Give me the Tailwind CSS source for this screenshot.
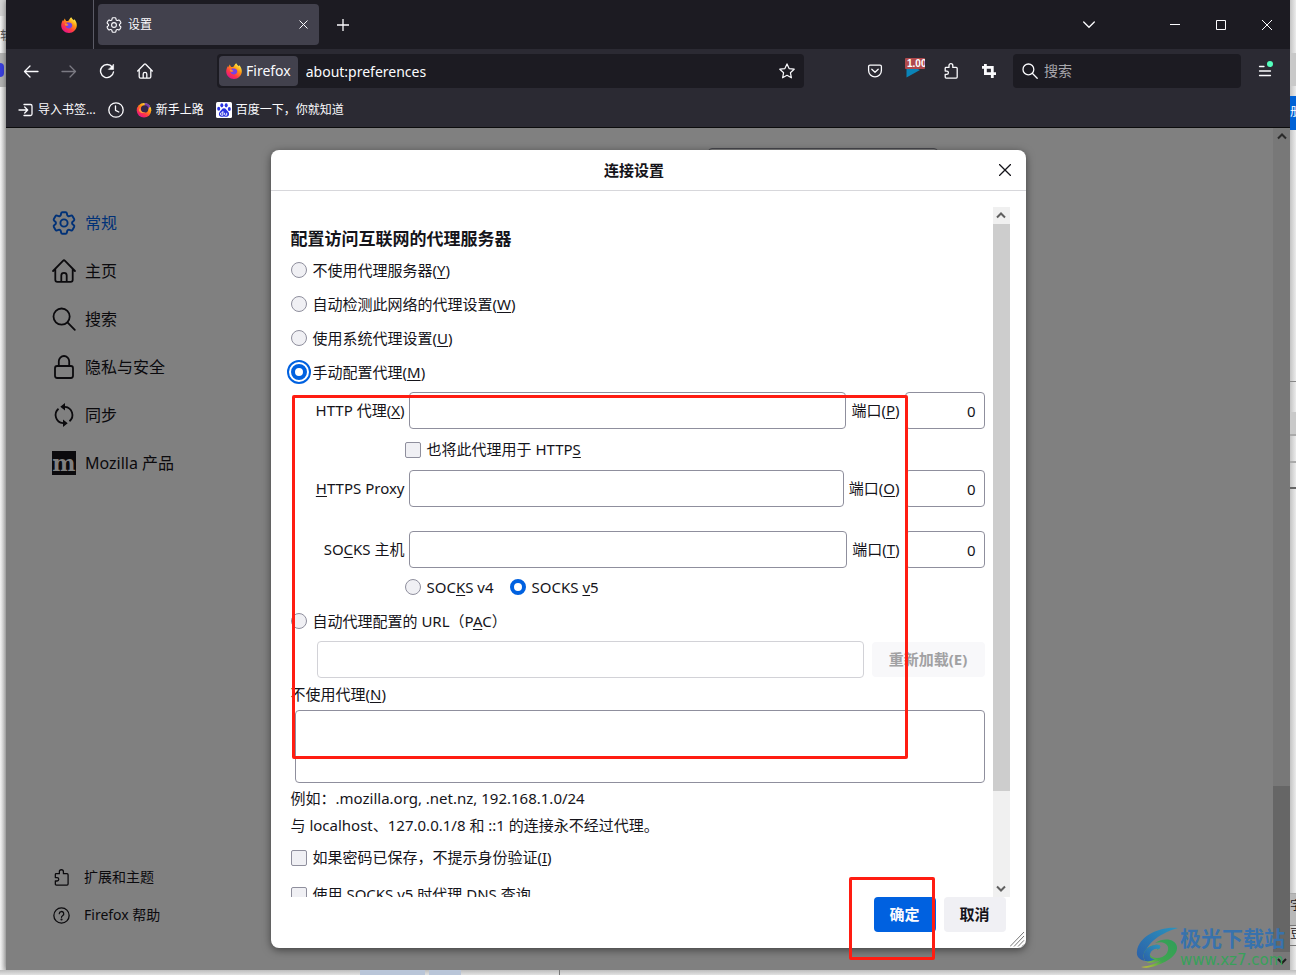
<!DOCTYPE html>
<html lang="zh-CN">
<head>
<meta charset="utf-8">
<meta name="viewport" content="width=device-width, initial-scale=1">
<title>设置</title>
<script src="https://cdn.jsdelivr.net/npm/@tailwindcss/browser@4"></script>
</head>
<body class="font-['Noto_Sans','Noto_Sans_CJK_SC',sans-serif] bg-[#e4e4e4] text-[#15141a]">
<svg class="absolute size-0" aria-hidden="true">
  <defs>
    <linearGradient id="fox" x1="0.85" y1="0.1" x2="0.25" y2="0.95"><stop offset="0" stop-color="#fff44f"/><stop offset=".35" stop-color="#ff980e"/><stop offset=".7" stop-color="#ff3647"/><stop offset="1" stop-color="#e31587"/></linearGradient>
    <linearGradient id="swoop" x1="1" y1="0" x2="0" y2="1"><stop offset="0" stop-color="#2b93bd"/><stop offset="1" stop-color="#2c5fa8"/></linearGradient>
    <linearGradient id="leaf" x1="1" y1="0" x2="0" y2="1"><stop offset="0" stop-color="#2f9e5a"/><stop offset=".6" stop-color="#3fa64f"/><stop offset="1" stop-color="#d3c62f"/></linearGradient>
  </defs>
  <symbol id="i-fox" viewBox="0 0 16 16">
    <path d="M10.3.2c.4 1.300 1.400 1.900 2.400 3 .3.100.3-.9.200-1.200C14.800 3.600 16 6 15.800 8.800 15.500 12.800 12.200 16 8 16 3.700 16 .3 12.700.2 8.500.2 6.300 1 4.300 2.100 3l.3 1.300C3 3.600 3.200 2.300 3.900 1.600c.1 1 .6 1.800 1.300 2.300h2C8 3 8.800 1.200 10.300.2z" fill="url(#fox)"/>
    <path d="M5.300 5.400c1-.4 2 .1 2.700.1 1.200-.2 3.200.7 3.300 2.700.1 1.900-1.500 3.300-3.300 3.300-1.900 0-3.400-1.300-3.400-3.100 1 .8 2.200.5 2.900-.1-.5-.4-1.800-.3-2-1.200-.1-.5.200-1 1.200-1.100z" fill="#7542e5"/>
    <path d="M4.300 6.200c.4.900 1.500 1.400 3.200 1.200-.7 1.100-2 1.400-3.200.9z" fill="#ffb02a"/>
  </symbol>
  <symbol id="i-gear" viewBox="2 2 20 20" fill="none" stroke="currentColor">
    <path d="M9.594 3.940c.09-.542.56-.94 1.110-.94h2.593c.55 0 1.020.398 1.110.94l.213 1.281c.063.374.313.686.645.87.074.04.147.083.22.127.325.196.72.257 1.075.124l1.217-.456a1.125 1.125 0 0 1 1.370.49l1.296 2.247a1.125 1.125 0 0 1-.26 1.431l-1.003.827c-.293.241-.438.613-.43.992a7.723 7.723 0 0 1 0 .255c-.008.378.137.75.43.991l1.004.827c.424.35.534.955.26 1.430l-1.298 2.247a1.125 1.125 0 0 1-1.369.491l-1.217-.456c-.355-.133-.75-.072-1.076.124a6.470 6.470 0 0 1-.22.128c-.331.183-.581.495-.644.869l-.213 1.281c-.09.543-.56.94-1.110.94h-2.594c-.55 0-1.019-.398-1.110-.94l-.213-1.281c-.062-.374-.312-.686-.644-.87a6.520 6.520 0 0 1-.22-.127c-.325-.196-.72-.257-1.076-.124l-1.217.456a1.125 1.125 0 0 1-1.369-.49l-1.297-2.247a1.125 1.125 0 0 1 .26-1.431l1.004-.827c.292-.24.437-.613.43-.991a6.932 6.932 0 0 1 0-.255c.007-.38-.138-.751-.43-.992l-1.004-.827a1.125 1.125 0 0 1-.26-1.430l1.297-2.247a1.125 1.125 0 0 1 1.370-.491l1.216.456c.356.133.751.072 1.076-.124.072-.044.146-.086.22-.128.332-.183.582-.495.644-.869l.214-1.280Z"/>
    <circle cx="12" cy="12" r="3"/>
  </symbol>
  <symbol id="i-home" viewBox="0 0 16 16" fill="none" stroke="currentColor" stroke-linecap="round" stroke-linejoin="round">
    <path d="M.7 8 7.300 1.200a1 1 0 0 1 1.400 0L15.300 8M2.200 6.600v7.200c0 .8.500 1.400 1.400 1.400h8.800c.9 0 1.400-.6 1.400-1.400V6.600M6.200 15v-4c0-1 .7-1.700 1.800-1.700s1.800.7 1.800 1.700v4"/>
  </symbol>
  <symbol id="i-search" viewBox="0 0 16 16" fill="none" stroke="currentColor" stroke-linecap="round">
    <circle cx="6.400" cy="6.400" r="5.400"/><path d="m10.300 10.300 4.900 4.900"/>
  </symbol>
  <symbol id="i-puzzle" viewBox="0 0 16 16" fill="none" stroke="currentColor" stroke-linejoin="round">
    <path d="M2.200 5.200c0-.5.300-.8.800-.8h3V2.600a1.900 1.900 0 0 1 3.800 0v1.800h3.400c.6 0 1 .4 1 1v8.700c0 .6-.4 1-1 1H3.200c-.6 0-1-.4-1-1v-2.800h1.600a1.500 1.500 0 0 0 0-3.200H2.200z"/>
  </symbol>
</svg>

<div class="flex h-screen flex-col overflow-hidden">
  <div class="flex min-h-0 flex-1">
    <!-- sliver of the window behind, left -->
    <div class="flex w-[6px] shrink-0 flex-col overflow-hidden bg-linear-to-r from-[#f6f6f6] to-[#cfcfcf] text-xs" aria-hidden="true">
      <div class="h-4 bg-[#d4d4d4]"></div>
      <div class="h-[37px] pt-3 text-[#555] whitespace-nowrap">软</div>
      <div class="h-[34px] bg-[#b4b4b4] pt-[10px]"><div class="h-[14px] w-1 rounded-r-full bg-[#3a3fe0]"></div></div>
    </div>

    <div class="flex min-w-0 flex-1 flex-col shadow-[0_0_6px_rgba(0,0,0,0.5)]">
      <!-- tab strip -->
      <div class="flex h-[49px] shrink-0 items-center bg-[#1c1b22] text-[#fbfbfe]">
        <div class="flex h-full w-[88px] shrink-0 items-center justify-end border-r border-[#5b5b66] pr-4">
          <svg class="size-4" role="img" aria-label="Firefox"><use href="#i-fox"/></svg>
        </div>
        <div class="ml-1 flex h-[41px] w-[221px] items-center rounded bg-[#42414d] px-2">
          <svg class="size-4 stroke-[1.4]" aria-hidden="true"><use href="#i-gear"/></svg>
          <span class="ml-[6px] flex-1 text-xs">设置</span>
          <button class="grid size-4 place-items-center" aria-label="关闭标签页"><svg class="size-[9px]" viewBox="0 0 9 9" fill="none" stroke="currentColor"><path d="m.5.5 8 8m0-8-8 8"/></svg></button>
        </div>
        <button class="ml-4 grid size-4 place-items-center" aria-label="新建标签页"><svg class="size-3" viewBox="0 0 12 12" fill="none" stroke="currentColor" stroke-width="1.300"><path d="M6 0v12M0 6h12"/></svg></button>
        <div class="flex-1"></div>
        <button class="mr-10 grid h-8 w-[46px] place-items-center" aria-label="列出标签页"><svg class="size-3" viewBox="0 0 12 12" fill="none" stroke="currentColor" stroke-width="1.300" stroke-linecap="round"><path d="m.7 3 5.300 5.300L11.300 3"/></svg></button>
        <button class="grid h-8 w-[46px] place-items-center" aria-label="最小化"><svg class="size-[10px]" viewBox="0 0 10 10" stroke="currentColor"><path d="M0 4.500h10"/></svg></button>
        <button class="grid h-8 w-[46px] place-items-center" aria-label="最大化"><svg class="size-[10px]" viewBox="0 0 10 10" fill="none" stroke="currentColor"><path d="M.5.5h9v9h-9z"/></svg></button>
        <button class="grid h-8 w-[46px] place-items-center" aria-label="关闭"><svg class="size-[10px]" viewBox="0 0 10 10" fill="none" stroke="currentColor"><path d="m0 0 10 10M10 0 0 10"/></svg></button>
      </div>

      <!-- navigation bar -->
      <div class="flex h-[44px] shrink-0 items-center bg-[#2b2a33] text-[#fbfbfe]">
        <div class="ml-[17px] flex items-center gap-[22px]">
          <button aria-label="后退"><svg class="block size-4" viewBox="0 0 16 16" fill="none" stroke="currentColor" stroke-width="1.300" stroke-linecap="round" stroke-linejoin="round"><path d="M15 8.500H1.500M7 3 1.500 8.500 7 14"/></svg></button>
          <button aria-label="前进" class="text-[#7b7a83]" disabled><svg class="block size-4" viewBox="0 0 16 16" fill="none" stroke="currentColor" stroke-width="1.300" stroke-linecap="round" stroke-linejoin="round"><path d="M1 8.500h13.500M9 3l5.500 5.500L9 14"/></svg></button>
          <button aria-label="刷新"><svg class="block size-4" viewBox="0 0 16 16" fill="none" stroke="currentColor" stroke-width="1.400" stroke-linecap="round"><path d="M13.300 4.200A6.500 6.500 0 1 0 14.500 9"/><path d="M14.600 1.500v4.900H9.700z" fill="currentColor" stroke-width=".6" stroke-linejoin="round"/></svg></button>
          <button aria-label="主页"><svg class="block size-4 stroke-[1.3]"><use href="#i-home"/></svg></button>
        </div>
        <div class="ml-[64px] flex h-[34px] flex-1 items-center rounded bg-[#1c1b22] p-[2px]">
          <button class="flex h-[30px] items-center rounded bg-[#42414d] px-[7px] text-sm"><svg class="mr-1 size-4" aria-hidden="true"><use href="#i-fox"/></svg>Firefox</button>
          <input class="ml-2 h-full min-w-0 flex-1 bg-transparent text-sm outline-none" aria-label="地址栏" value="about:preferences">
          <button class="mr-[7px]" aria-label="为此页添加书签"><svg class="block size-4" viewBox="0 0 16 16" fill="none" stroke="currentColor" stroke-width="1.200" stroke-linejoin="round"><path d="m8 .9 2.100 4.700 5.100.6-3.800 3.500 1 5.100L8 12.300l-4.400 2.500 1-5.100L.8 6.200l5.100-.6z"/></svg></button>
        </div>
        <div class="ml-[63px] flex items-center gap-[22px]">
          <button aria-label="Pocket"><svg class="block size-4" viewBox="0 0 16 16" fill="none" stroke="currentColor" stroke-width="1.300" stroke-linecap="round" stroke-linejoin="round"><path d="M3 2.200h10c.8 0 1.400.5 1.400 1.300v4A6.400 6.400 0 0 1 1.600 7.500v-4c0-.8.600-1.300 1.400-1.300z"/><path d="M4.800 6.200 8 9.200l3.200-3"/></svg></button>
          <button class="relative size-4" aria-label="视频速度 1.00">
            <svg class="block size-4" viewBox="0 0 16 16"><path d="M1.500 1v13.500L15 7z" fill="#0a84b8"/></svg>
            <span class="absolute -top-[5px] left-0 h-[11px] w-5 overflow-hidden rounded-[1px] bg-[#b04a4c] pl-[2px] text-left font-['Liberation_Sans',sans-serif] text-[10px] leading-[11px] font-bold text-white">1.00</span>
          </button>
          <button aria-label="扩展"><svg class="block size-4 stroke-[1.3]"><use href="#i-puzzle"/></svg></button>
          <button aria-label="截图"><svg class="block size-4" viewBox="0 0 16 16" fill="none" stroke="currentColor" stroke-width="2.800"><path d="M4.400 1v9.600h6.800M1 4.400h10.300V15M12 10.600h3"/></svg></button>
        </div>
        <label class="ml-4 flex h-[34px] w-[228px] items-center rounded bg-[#1c1b22] pl-[9px]">
          <svg class="size-4 stroke-[1.3]" aria-hidden="true"><use href="#i-search"/></svg>
          <input class="ml-[6px] min-w-0 flex-1 bg-transparent text-sm outline-none placeholder:text-[#a8a7ad]" placeholder="搜索" aria-label="搜索">
        </label>
        <button class="relative mr-[17px] ml-4" aria-label="打开应用程序菜单"><svg class="block size-4" viewBox="0 0 16 16" stroke="currentColor" stroke-width="1.300" stroke-linecap="round"><path d="M2.500 3.500H7M2.500 8h11M2.500 12.500h11"/></svg><span class="absolute -top-[2px] right-0 size-[6px] rounded-full bg-[#54ffbd]"></span></button>
      </div>

      <!-- bookmarks -->
      <div class="flex h-[35px] shrink-0 items-center border-b border-[#0c0c0d] bg-[#2b2a33] pl-3 text-xs whitespace-nowrap text-[#fbfbfe]">
        <a href="#" class="flex items-center gap-1"><svg class="size-4" viewBox="0 0 16 16" fill="none" stroke="currentColor" stroke-width="1.300" stroke-linecap="round" stroke-linejoin="round"><path d="M6 2.500h6.500c.8 0 1.500.6 1.500 1.500v8c0 .8-.7 1.500-1.500 1.500H6M1 8h8.500M6.700 5 9.700 8l-3 3"/></svg>导入书签...</a>
        <a href="#" class="ml-3" aria-label="历史"><svg class="size-4" viewBox="0 0 16 16" fill="none" stroke="currentColor" stroke-width="1.300" stroke-linecap="round" stroke-linejoin="round"><circle cx="8" cy="8" r="7.200"/><path d="M7.500 4v4.300l3.300 1.700"/></svg></a>
        <a href="#" class="ml-3 flex items-center gap-1"><svg class="size-4" viewBox="0 0 16 16"><circle cx="8" cy="8.300" r="7.300" fill="url(#fox)"/><path d="M8.500 1c3 0 5 1.500 5.600 3.500l-2 2.700C10.500 5 8.500 4.500 8.500 1z" fill="#7b3fb0"/><circle cx="8.600" cy="6.900" r="3.700" fill="#33254a"/><path d="M4.300 5.200c0 3.500 1.800 5.400 5 5.300-2.600 1.300-6 .3-6.600-2.600z" fill="#ff9a3c"/></svg>新手上路</a>
        <a href="#" class="ml-3 flex items-center gap-1"><svg class="size-4" viewBox="0 0 16 16"><rect width="16" height="16" rx="1.500" fill="#fff"/><g fill="#2932e1"><ellipse cx="5.800" cy="3.300" rx="1.500" ry="2.100"/><ellipse cx="10.200" cy="3.300" rx="1.500" ry="2.100"/><ellipse cx="2.700" cy="6.700" rx="1.500" ry="2"/><ellipse cx="13.300" cy="7" rx="1.500" ry="2"/><path d="M8 6.200c2 0 2.600 2 4 3.400 1.800 1.800 1.300 5-1.200 5.200-1 .1-1.800-.3-2.800-.3s-1.800.4-2.800.3c-2.500-.2-3-3.400-1.200-5.200C5.400 8.200 6 6.200 8 6.200z"/></g><path d="M6.900 9v4.200H5.600a1.200 1.200 0 0 1 0-2.400h1.300M8.600 10.800v1.600c0 .5.300.8.800.8h1.300v-2.400" fill="none" stroke="#fff" stroke-width=".9"/></svg>百度一下，你就知道</a>
      </div>

      <!-- page -->
      <div class="relative flex min-h-0 flex-1 bg-[#808080] text-[#0b0a0d]">
        <nav class="flex w-[260px] shrink-0 flex-col pt-[71px] pl-[46px]" aria-label="设置分类">
          <a href="#" class="flex h-12 items-center gap-[9px] text-[#003177]"><svg class="size-6 stroke-[1.6]"><use href="#i-gear"/></svg>常规</a>
          <a href="#" class="flex h-12 items-center gap-[9px]"><svg class="size-6 stroke-[1.2]"><use href="#i-home"/></svg>主页</a>
          <a href="#" class="flex h-12 items-center gap-[9px]"><svg class="size-6 stroke-[1.2]"><use href="#i-search"/></svg>搜索</a>
          <a href="#" class="flex h-12 items-center gap-[9px]"><svg class="size-6" viewBox="0 0 24 24" fill="none" stroke="currentColor" stroke-width="1.800"><rect x="3" y="11" width="18" height="12" rx="2.200"/><path d="M6.800 11V6.200a5.200 5.200 0 0 1 10.400 0V11"/></svg>隐私与安全</a>
          <a href="#" class="flex h-12 items-center gap-[9px]"><svg class="size-6" viewBox="0 0 24 24" fill="none" stroke="currentColor" stroke-width="1.800"><path d="M6.500 5.800a8.200 8.200 0 0 0 4.500 14.400M17.500 18.200A8.200 8.200 0 0 0 13 3.800"/><path d="M13 0v7.600L8.300 3.800zM11 16.400V24l4.700-3.800z" fill="currentColor" stroke="none"/></svg>同步</a>
          <a href="#" class="flex h-12 items-center gap-[9px]"><span class="flex size-6 items-center justify-center bg-[#0b0a0d] font-['DejaVu_Serif',serif] text-[22px] leading-5 font-bold text-[#808080]" aria-hidden="true">m</span>Mozilla 产品</a>
          <div class="mt-auto mb-9 text-sm">
            <a href="#" class="flex h-[38px] items-center gap-[14px]"><svg class="ml-px size-[17px] stroke-[1.2]"><use href="#i-puzzle"/></svg>扩展和主题</a>
            <a href="#" class="flex h-[38px] items-center gap-[14px]"><svg class="ml-px size-[17px]" viewBox="0 0 16 16" fill="none" stroke="currentColor" stroke-width="1.200" stroke-linecap="round"><circle cx="8" cy="8" r="7.200"/><path d="M5.900 6.300a2.100 2.100 0 1 1 3.100 1.900c-.7.400-1 .8-1 1.500"/><circle cx="8" cy="11.800" r=".4" fill="currentColor"/></svg>Firefox 帮助</a>
          </div>
        </nav>
        <main class="flex-1 pt-5 pr-[335px]">
          <input class="ml-auto block h-8 w-[230px] rounded border border-[#48484e] bg-[#808080]" aria-label="在设置中查找">
        </main>
        <div class="flex w-[17px] flex-col items-center bg-[#787878]" aria-hidden="true">
          <svg class="h-[17px] w-[10px]" viewBox="0 0 10 17" fill="none" stroke="#2a2a2a" stroke-width="2"><path d="m1 10.500 4-4 4 4"/></svg>
          <div class="flex-1"></div>
          <div class="h-[166px] w-full bg-[#666]"></div>
          <svg class="h-[18px] w-[10px]" viewBox="0 0 10 18" fill="none" stroke="#1c1c1c" stroke-width="2"><path d="m1 7 4 4 4-4"/></svg>
        </div>

        <!-- connection dialog -->
        <div class="absolute inset-0 flex justify-center py-[22px]">
          <div class="relative flex w-[755px] flex-col rounded-lg bg-white text-[15px] text-[#15141a] shadow-[0_2px_8px_rgba(0,0,0,0.5)]" role="dialog" aria-labelledby="dlg-title">
            <div class="flex h-[41px] shrink-0 items-center border-b border-[#d7d7db]">
              <h2 id="dlg-title" class="flex-1 text-center font-bold">连接设置</h2>
              <button class="mr-[14px] grid size-[14px] place-items-center" aria-label="关闭"><svg class="size-3" viewBox="0 0 12 12" fill="none" stroke="currentColor" stroke-width="1.300"><path d="m0 0 12 12M12 0 0 12"/></svg></button>
            </div>

            <div class="mt-4 flex min-h-0 flex-1 px-4">
              <form class="min-w-0 flex-1 overflow-hidden pr-2 pl-1">
                <h3 class="mt-5 mb-[2px] text-[17px] leading-6 font-bold">配置访问互联网的代理服务器</h3>
                <label class="flex h-[34px] items-center gap-[6px]"><input type="radio" name="mode" class="size-4 appearance-none rounded-full border border-[#8f8f9d] bg-[#f0f0f4]"><span>不使用代理服务器(<u class="underline-offset-2">Y</u>)</span></label>
                <label class="flex h-[34px] items-center gap-[6px]"><input type="radio" name="mode" class="size-4 appearance-none rounded-full border border-[#8f8f9d] bg-[#f0f0f4]"><span>自动检测此网络的代理设置(<u class="underline-offset-2">W</u>)</span></label>
                <label class="flex h-[34px] items-center gap-[6px]"><input type="radio" name="mode" class="size-4 appearance-none rounded-full border border-[#8f8f9d] bg-[#f0f0f4]"><span>使用系统代理设置(<u class="underline-offset-2">U</u>)</span></label>
                <label class="-ml-1 flex h-[34px] items-center gap-[2px]"><span class="grid size-6 place-items-center rounded-full border-2 border-[#0061e0]"><input type="radio" name="mode" checked class="size-4 appearance-none rounded-full border-4 border-[#0061e0] bg-white"></span><span>手动配置代理(<u class="underline-offset-2">M</u>)</span></label>

                <div class="mt-[3px] flex h-[37px] items-center">
                  <label for="http" class="w-[114px] shrink-0 text-right whitespace-nowrap">HTTP 代理(<u class="underline-offset-2">X</u>)</label>
                  <input id="http" class="ml-1 h-full min-w-0 flex-1 rounded border border-[#8f8f9d] px-2">
                  <label for="http-port" class="mx-[5px]">端口(<u class="underline-offset-2">P</u>)</label>
                  <input id="http-port" class="h-full w-20 rounded border border-[#8f8f9d] px-2 text-right" value="0">
                </div>
                <label class="ml-[114px] flex h-[41px] items-center gap-[6px]"><input type="checkbox" class="size-4 appearance-none rounded-xs border border-[#8f8f9d] bg-[#f0f0f4]"><span>也将此代理用于 HTTP<u class="underline-offset-2">S</u></span></label>
                <div class="flex h-[37px] items-center">
                  <label for="https" class="w-[114px] shrink-0 text-right whitespace-nowrap"><u class="underline-offset-2">H</u>TTPS Proxy</label>
                  <input id="https" class="ml-1 h-full min-w-0 flex-1 rounded border border-[#8f8f9d] px-2">
                  <label for="https-port" class="mx-[5px]">端口(<u class="underline-offset-2">O</u>)</label>
                  <input id="https-port" class="h-full w-20 rounded border border-[#8f8f9d] px-2 text-right" value="0">
                </div>
                <div class="mt-6 flex h-[37px] items-center">
                  <label for="socks" class="w-[114px] shrink-0 text-right whitespace-nowrap">SO<u class="underline-offset-2">C</u>KS 主机</label>
                  <input id="socks" class="ml-1 h-full min-w-0 flex-1 rounded border border-[#8f8f9d] px-2">
                  <label for="socks-port" class="mx-[5px]">端口(<u class="underline-offset-2">T</u>)</label>
                  <input id="socks-port" class="h-full w-20 rounded border border-[#8f8f9d] px-2 text-right" value="0">
                </div>
                <div class="ml-[114px] flex h-[38px] items-center gap-4">
                  <label class="flex items-center gap-[6px]"><input type="radio" name="socksv" class="size-4 appearance-none rounded-full border border-[#8f8f9d] bg-[#f0f0f4]"><span>SOC<u class="underline-offset-2">K</u>S v4</span></label>
                  <label class="flex items-center gap-[6px]"><input type="radio" name="socksv" checked class="size-4 appearance-none rounded-full border-4 border-[#0061e0] bg-white"><span>SOCKS <u class="underline-offset-2">v</u>5</span></label>
                </div>
                <label class="flex h-[30px] items-center gap-[6px]"><input type="radio" name="mode" class="size-4 appearance-none rounded-full border border-[#8f8f9d] bg-[#f0f0f4]"><span>自动代理配置的 URL（P<u class="underline-offset-2">A</u>C）</span></label>
                <div class="mt-[5px] flex h-[37px] items-center gap-2 pl-[26px]">
                  <input disabled aria-label="自动代理配置的 URL" class="h-full min-w-0 flex-1 rounded border border-[#d2d2d7] bg-white px-2">
                  <button type="button" disabled class="h-[35px] w-[113px] rounded bg-[#f8f8fa] font-bold text-[#a1a1a3]">重新加载(E)</button>
                </div>
                <label for="noproxy" class="flex h-8 items-center"><span>不使用代理(<u class="underline-offset-2">N</u>)</span></label>
                <div class="pl-1"><textarea id="noproxy" class="block h-[73px] w-full resize-none rounded border border-[#8f8f9d] px-2"></textarea></div>
                <p class="mt-[2px] leading-[27px]">例如：.mozilla.org, .net.nz, 192.168.1.0/24</p>
                <p class="leading-[27px]">与 localhost、127.0.0.1/8 和 ::1 的连接永不经过代理。</p>
                <label class="flex h-[37px] items-center gap-[6px]"><input type="checkbox" class="size-4 appearance-none rounded-xs border border-[#8f8f9d] bg-[#f0f0f4]"><span>如果密码已保存，不提示身份验证(<u class="underline-offset-2">I</u>)</span></label>
                <label class="flex h-[37px] items-center gap-[6px]"><input type="checkbox" class="size-4 appearance-none rounded-xs border border-[#8f8f9d] bg-[#f0f0f4]"><span>使用 SOCKS v5 时代理 <u class="underline-offset-2">D</u>NS 查询</span></label>
              </form>
              <div class="flex w-[17px] flex-col items-center bg-[#f0f0f0]" aria-hidden="true">
                <svg class="h-[17px] w-[10px]" viewBox="0 0 10 17" fill="none" stroke="#606060" stroke-width="2"><path d="m1 10.500 4-4 4 4"/></svg>
                <div class="h-[567px] w-full bg-[#cdcdcd]"></div>
                <div class="flex-1"></div>
                <svg class="h-[17px] w-[10px]" viewBox="0 0 10 17" fill="none" stroke="#606060" stroke-width="2"><path d="m1 6.500 4 4 4-4"/></svg>
              </div>
            </div>

            <div class="flex h-[51px] shrink-0 justify-end gap-2 pr-5 font-bold">
              <button class="h-[35px] w-[62px] rounded bg-[#0061e0] text-[#fbfbfe]">确定</button>
              <button class="h-[35px] w-[62px] rounded bg-[#f0f0f4]">取消</button>
            </div>
            <svg class="absolute right-px bottom-px size-[15px]" viewBox="0 0 15 15" stroke="#777" fill="none" aria-hidden="true"><path d="M0 14.500 14 0M4 14.500 14 4M8 14.500 14 8.300M12 14.500l2-2"/></svg>

            <!-- highlight frames -->
            <div class="pointer-events-none absolute top-[245px] left-[21px] h-[364px] w-[616px] rounded-xs border-3 border-[#ff1d12]"></div>
            <div class="pointer-events-none absolute top-[727px] left-[578px] h-[83px] w-[86px] rounded-xs border-3 border-[#ff1d12]"></div>
          </div>
        </div>

        <!-- site watermark -->
        <div class="absolute right-[4px] bottom-0 flex items-center gap-px" aria-label="极光下载站">
          <svg class="h-[42px] w-[43px]" viewBox="0 0 43 42"><path d="M42 1C24-1 3 9 1 24c-1 6 3 9 8 10C6 22 18 8 42 1z" fill="url(#swoop)"/><path d="M9 34c-4-7 1-15 10-16 6-1 7 3 2 5 3-4-4-3-6 0-3 4 0 8 6 8 8 0 12-6 11-11-1-4-7-6-13-4 9-6 21-4 22 4 1 9-13 17-26 20-3 1-7 1-10 0 9-1 16-4 20-7-7 3-13 4-16 1z" fill="url(#leaf)"/><path d="M9 34c-4-7 1-15 10-16 5-1 7 2 4 4-4-1-8 1-9 5-1 3 2 5 5 5-3 2-7 3-10 2z" fill="url(#swoop)"/></svg>
          <div class="w-[106px] whitespace-nowrap">
            <div class="text-[21px] leading-6 font-bold text-[#3872ad]">极光下载站</div>
            <div class="font-['DejaVu_Sans',sans-serif] text-[15px] leading-5 text-[#38a05a]">www.xz7.com</div>
          </div>
        </div>
      </div>
    </div>

    <!-- sliver of the window behind, right -->
    <div class="flex w-[6px] shrink-0 flex-col overflow-hidden bg-linear-to-r from-[#c4c4c4] to-[#ececec] text-xs" aria-hidden="true">
      <div class="h-[53px]"></div>
      <div class="h-[33px] bg-[#c9c9c9]"></div>
      <div class="h-[10px]"></div>
      <div class="h-[34px] bg-[#0061d5] pt-2 whitespace-nowrap text-white">册</div>
      <div class="h-[251px]"></div>
      <div class="h-[31px] border-t border-[#888]"></div>
      <div class="h-[22px] bg-[#c9c9c9]"></div>
      <div class="h-[29px] border-y-2 border-[#aaa]"></div>
      <div class="h-[26px] border-b-2 border-[#666]"></div>
      <div class="h-[404px]"></div>
      <div class="h-[32px] border-t border-[#aaa] bg-[#b8b8b8] pt-1 whitespace-nowrap">字</div>
      <div class="h-[21px] border-y border-[#777] whitespace-nowrap">豆</div>
    </div>
  </div>

  <!-- sliver of the window behind, bottom -->
  <div class="flex h-[5px] shrink-0 bg-linear-to-b from-[#bdbdbd] to-[#e2e2e2]" aria-hidden="true">
    <div class="ml-[360px] w-[65px] bg-[#b9c5d8]"></div>
    <div class="ml-1 w-8 bg-[#b9c5d8]"></div>
    <div class="ml-[98px] w-px bg-[#777]"></div>
  </div>
</div>
</body>
</html>
